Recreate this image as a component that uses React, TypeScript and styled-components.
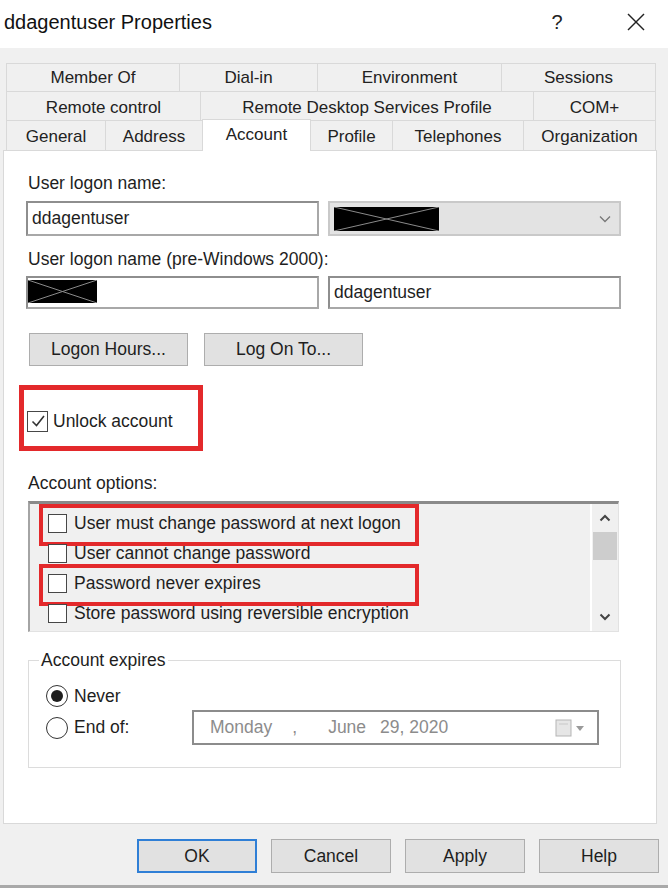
import React from "react";
import styled, { createGlobalStyle, css } from "styled-components";

const GlobalStyle = createGlobalStyle`
  html, body { margin: 0; padding: 0; background: #ffffff; }
  body { font-family: "Liberation Sans", Arial, sans-serif; color: #1e1e1e; }
  * { box-sizing: border-box; }
`;

const Window = styled.div`
  width: 668px;
  height: 894px;
  background: #f0f0f0;
  display: flex;
  flex-direction: column;
  overflow: hidden;
`;

const TitleBar = styled.div`
  height: 48px;
  flex-shrink: 0;
  background: #ffffff;
  display: flex;
  align-items: center;
  padding: 0 20px 0 4px;
`;

const Title = styled.div`
  flex: 1;
  font-size: 20px;
  line-height: 24px;
  margin-top: -4px;
  color: #111;
`;

const HelpGlyph = styled.div`
  width: 24px;
  text-align: center;
  font-size: 20px;
  line-height: 24px;
  margin-top: -4px;
  margin-right: 55px;
  color: #222;
`;

const CloseIcon = styled.svg`
  width: 24px;
  height: 24px;
  margin-top: -4px;
`;

const TabStrip = styled.div`
  margin: 15px 0 0 6px;
  width: 650px;
  display: flex;
  flex-direction: column;
`;

const TabRow = styled.div<{ $h: number; $pt: number }>`
  display: flex;
  height: ${(p) => p.$h}px;
  padding-top: 0;
  & > div {
    padding-top: ${(p) => p.$pt}px;
  }
`;

const Tab = styled.div<{ $w: number; $active?: boolean }>`
  width: ${(p) => p.$w + 1}px;
  height: 100%;
  flex-shrink: 0;
  margin-right: -1px;
  display: flex;
  align-items: center;
  justify-content: center;
  font-size: 17px;
  color: #222;
  background: #f0f0f0;
  border: 1px solid #d9d9d9;
  border-bottom: none;
  ${(p) =>
    p.$active &&
    css`
      background: #ffffff;
      height: 32px;
      margin-top: -1px;
      padding-bottom: 4px;
      position: relative;
      z-index: 2;
    `}
`;

const Panel = styled.div`
  margin-left: 3px;
  width: 654px;
  height: 674px;
  flex-shrink: 0;
  background: #ffffff;
  border: 1px solid #d9d9d9;
  padding: 22px 0 0 22px;
  display: flex;
  flex-direction: column;
`;

const FieldLabel = styled.div<{ $mt: number }>`
  font-size: 17.5px;
  line-height: 20px;
  margin-top: ${(p) => p.$mt}px;
  padding-left: 2px;
  color: #1e1e1e;
`;

const Row = styled.div<{ $mt: number; $gap: number }>`
  display: flex;
  margin-top: ${(p) => p.$mt}px;
  gap: ${(p) => p.$gap}px;
`;

const TextBox = styled.div<{ $h: number }>`
  width: 293px;
  height: ${(p) => p.$h}px;
  background: #ffffff;
  border: 2px solid #a8a8a8;
  border-top-color: #8e8e8e;
  border-left-color: #8e8e8e;
  display: flex;
  align-items: center;
  padding-left: 4px;
  font-size: 17.5px;
  color: #1e1e1e;
`;

const RedactedBox = styled(TextBox)`
  padding-left: 0;
  align-items: flex-start;
  padding-top: 2px;
`;

const ComboBox = styled.div<{ $h: number }>`
  width: 293px;
  height: ${(p) => p.$h}px;
  background: #e3e3e3;
  border: 2px solid #c9c9c9;
  display: flex;
  align-items: center;
  justify-content: space-between;
  padding: 0 8px 0 4px;
`;

const Redaction = ({ w, h }: { w: number; h: number }) => (
  <svg width={w} height={h} viewBox={`0 0 ${w} ${h}`}>
    <rect x="0" y="0" width={w} height={h} fill="#000" />
    <line x1="0" y1="0" x2={w} y2={h} stroke="#8a8a8a" strokeWidth="1" />
    <line x1="0" y1={h} x2={w} y2="0" stroke="#8a8a8a" strokeWidth="1" />
  </svg>
);

const Chevron = styled.svg`
  width: 12px;
  height: 8px;
`;

const PushButton = styled.div<{ $w: number; $h: number; $default?: boolean }>`
  width: ${(p) => p.$w}px;
  height: ${(p) => p.$h}px;
  background: #e1e1e1;
  border: 1px solid #adadad;
  display: flex;
  align-items: center;
  justify-content: center;
  font-size: 17.5px;
  color: #1e1e1e;
  ${(p) =>
    p.$default &&
    css`
      border: 2px solid #2f7fd6;
    `}
`;

const ButtonGroup = styled(Row)`
  margin-left: 3px;
`;

const Annotation = styled.div`
  margin-top: 19px;
  margin-left: -7px;
  width: 184px;
  height: 66px;
  border: 5px solid #e3292b;
  display: flex;
  align-items: center;
  padding: 6px 0 0 3px;
  gap: 5px;
  font-size: 17.5px;
`;

const CheckBox = styled.span<{ $size: number }>`
  width: ${(p) => p.$size}px;
  height: ${(p) => p.$size}px;
  flex-shrink: 0;
  border: 1.5px solid #474747;
  background: #ffffff;
  display: inline-flex;
  align-items: center;
  justify-content: center;
`;

const ListBox = styled.div`
  margin-top: 8px;
  margin-left: 2px;
  width: 591px;
  height: 131px;
  background: #f0f0f0;
  border-top: 3px solid #8a8a8a;
  border-left: 2px solid #a4a4a4;
  border-right: 1px solid #e2e2e2;
  border-bottom: 1px solid #e2e2e2;
  display: grid;
  grid-template-columns: 1fr 28px;
`;

const ListItems = styled.div`
  padding-top: 4px;
  display: flex;
  flex-direction: column;
`;

const ListItem = styled.div<{ $flagged?: boolean }>`
  height: 30px;
  display: flex;
  align-items: center;
  padding-left: 18px;
  gap: 7px;
  font-size: 17.5px;
  color: #1e1e1e;
  position: relative;
  ${(p) =>
    p.$flagged &&
    css`
      &::after {
        content: "";
        position: absolute;
        left: 9px;
        top: -4px;
        width: 372px;
        height: 34px;
        border: 4px solid #e3292b;
      }
    `}
`;

const ScrollBar = styled.div`
  border-left: 2px solid #ffffff;
  background: #f0f0f0;
  display: flex;
  flex-direction: column;
  align-items: center;
`;

const ScrollArrow = styled.div`
  height: 28px;
  width: 100%;
  display: flex;
  align-items: center;
  justify-content: center;
`;

const ScrollThumb = styled.div`
  height: 28px;
  width: 24px;
  background: #cdcdcd;
`;

const ScrollSpacer = styled.div`
  flex: 1;
`;

const GroupBox = styled.fieldset`
  margin: 19px 0 0 2px;
  width: 593px;
  height: 117px;
  border: 1px solid #dcdcdc;
  padding: 0;
  min-width: 0;
`;

const Legend = styled.legend`
  font-size: 17.5px;
  line-height: 18px;
  padding: 0 2px;
  margin-left: 10px;
  color: #1e1e1e;
`;

const GroupContent = styled.div`
  padding: 14px 0 0 17px;
  display: flex;
  flex-direction: column;
`;

const OptionRow = styled.div<{ $h: number }>`
  height: ${(p) => p.$h}px;
  display: flex;
  align-items: center;
`;

const RadioLabel = styled.div`
  width: 146px;
  display: flex;
  align-items: center;
  gap: 6px;
  font-size: 17.5px;
  color: #1e1e1e;
`;

const Radio = styled.span<{ $on?: boolean }>`
  width: 22px;
  height: 22px;
  border-radius: 50%;
  border: 1.5px solid #333;
  background: #fff;
  display: inline-flex;
  align-items: center;
  justify-content: center;
  &::after {
    content: "";
    width: 12px;
    height: 12px;
    border-radius: 50%;
    background: ${(p) => (p.$on ? "#1e1e1e" : "transparent")};
  }
`;

const DateField = styled.div`
  width: 407px;
  height: 35px;
  background: #ffffff;
  border: 2px solid #8c8c8c;
  display: flex;
  align-items: center;
  padding-left: 16px;
  font-size: 17.5px;
  color: #8c8c8c;
`;

const DatePart = styled.span<{ $ml: number }>`
  margin-left: ${(p) => p.$ml}px;
`;

const CalendarIcon = styled.svg`
  margin-left: auto;
  margin-right: 10px;
  width: 32px;
  height: 20px;
`;

const DialogButtons = styled.div`
  margin-top: 15px;
  display: flex;
  justify-content: flex-end;
  gap: 14px;
  padding-right: 9px;
`;

const BottomEdge = styled.div`
  margin-top: 12px;
  flex: 1;
  background: #ffffff;
  border-top: 3px solid #a9a9a9;
`;

const tabRows: { h: number; pt: number; tabs: { label: string; w: number; active?: boolean }[] }[] = [
  {
    h: 28,
    pt: 0,
    tabs: [
      { label: "Member Of", w: 173 },
      { label: "Dial-in", w: 138 },
      { label: "Environment", w: 184 },
      { label: "Sessions", w: 154 },
    ],
  },
  {
    h: 29,
    pt: 3,
    tabs: [
      { label: "Remote control", w: 194 },
      { label: "Remote Desktop Services Profile", w: 333 },
      { label: "COM+", w: 122 },
    ],
  },
  {
    h: 30,
    pt: 3,
    tabs: [
      { label: "General", w: 99 },
      { label: "Address", w: 97 },
      { label: "Account", w: 108, active: true },
      { label: "Profile", w: 82 },
      { label: "Telephones", w: 131 },
      { label: "Organization", w: 132 },
    ],
  },
];

const options = [
  { label: "User must change password at next logon", flagged: true },
  { label: "User cannot change password" },
  { label: "Password never expires", flagged: true },
  { label: "Store password using reversible encryption" },
];

export default function App() {
  return (
    <>
      <GlobalStyle />
      <Window>
        <TitleBar>
          <Title>ddagentuser Properties</Title>
          <HelpGlyph>?</HelpGlyph>
          <CloseIcon viewBox="0 0 24 24">
            <line x1="4" y1="4" x2="20" y2="20" stroke="#222" strokeWidth="1.4" />
            <line x1="20" y1="4" x2="4" y2="20" stroke="#222" strokeWidth="1.4" />
          </CloseIcon>
        </TitleBar>

        <TabStrip>
          {tabRows.map((row, i) => (
            <TabRow key={i} $h={row.h} $pt={row.pt}>
              {row.tabs.map((t) => (
                <Tab key={t.label} $w={t.w} $active={t.active}>
                  {t.label}
                </Tab>
              ))}
            </TabRow>
          ))}
        </TabStrip>

        <Panel>
          <FieldLabel $mt={0}>User logon name:</FieldLabel>
          <Row $mt={8} $gap={9}>
            <TextBox $h={35}>ddagentuser</TextBox>
            <ComboBox $h={35}>
              <Redaction w={105} h={24} />
              <Chevron viewBox="0 0 12 8">
                <polyline points="1,1.5 6,6.5 11,1.5" fill="none" stroke="#777" strokeWidth="1.3" />
              </Chevron>
            </ComboBox>
          </Row>

          <FieldLabel $mt={13}>User logon name (pre-Windows 2000):</FieldLabel>
          <Row $mt={7} $gap={9}>
            <RedactedBox $h={33}>
              <Redaction w={69} h={23} />
            </RedactedBox>
            <TextBox $h={33}>ddagentuser</TextBox>
          </Row>

          <ButtonGroup $mt={24} $gap={16}>
            <PushButton $w={159} $h={33}>Logon Hours...</PushButton>
            <PushButton $w={159} $h={33}>Log On To...</PushButton>
          </ButtonGroup>

          <Annotation>
            <CheckBox $size={21}>
              <svg width="16" height="16" viewBox="0 0 16 16">
                <polyline points="2.5,8.5 6.5,12.5 14,3" fill="none" stroke="#333" strokeWidth="1.6" />
              </svg>
            </CheckBox>
            Unlock account
          </Annotation>

          <FieldLabel $mt={22}>Account options:</FieldLabel>
          <ListBox>
            <ListItems>
              {options.map((o) => (
                <ListItem key={o.label} $flagged={o.flagged}>
                  <CheckBox $size={19} />
                  {o.label}
                </ListItem>
              ))}
            </ListItems>
            <ScrollBar>
              <ScrollArrow>
                <svg width="12" height="8" viewBox="0 0 12 8">
                  <polyline points="1.5,6.5 6,2 10.5,6.5" fill="none" stroke="#444" strokeWidth="2" />
                </svg>
              </ScrollArrow>
              <ScrollThumb />
              <ScrollSpacer />
              <ScrollArrow>
                <svg width="12" height="8" viewBox="0 0 12 8">
                  <polyline points="1.5,1.5 6,6 10.5,1.5" fill="none" stroke="#444" strokeWidth="2" />
                </svg>
              </ScrollArrow>
            </ScrollBar>
          </ListBox>

          <GroupBox>
            <Legend>Account expires</Legend>
            <GroupContent>
              <OptionRow $h={26}>
                <RadioLabel>
                  <Radio $on />
                  Never
                </RadioLabel>
              </OptionRow>
              <OptionRow $h={37}>
                <RadioLabel>
                  <Radio />
                  End of:
                </RadioLabel>
                <DateField>
                  <DatePart $ml={0}>Monday</DatePart>
                  <DatePart $ml={20}>,</DatePart>
                  <DatePart $ml={31}>June</DatePart>
                  <DatePart $ml={14}>29, 2020</DatePart>
                  <CalendarIcon viewBox="0 0 32 20">
                    <rect x="1" y="2" width="15" height="16" fill="#e6e6e6" stroke="#b5b5b5" strokeWidth="1" />
                    <line x1="4" y1="6" x2="13" y2="6" stroke="#c8c8c8" strokeWidth="1" />
                    <polygon points="21,8 29,8 25,13" fill="#9a9a9a" />
                  </CalendarIcon>
                </DateField>
              </OptionRow>
            </GroupContent>
          </GroupBox>
        </Panel>

        <DialogButtons>
          <PushButton $w={120} $h={34} $default>OK</PushButton>
          <PushButton $w={120} $h={34}>Cancel</PushButton>
          <PushButton $w={120} $h={34}>Apply</PushButton>
          <PushButton $w={120} $h={34}>Help</PushButton>
        </DialogButtons>
        <BottomEdge />
      </Window>
    </>
  );
}
